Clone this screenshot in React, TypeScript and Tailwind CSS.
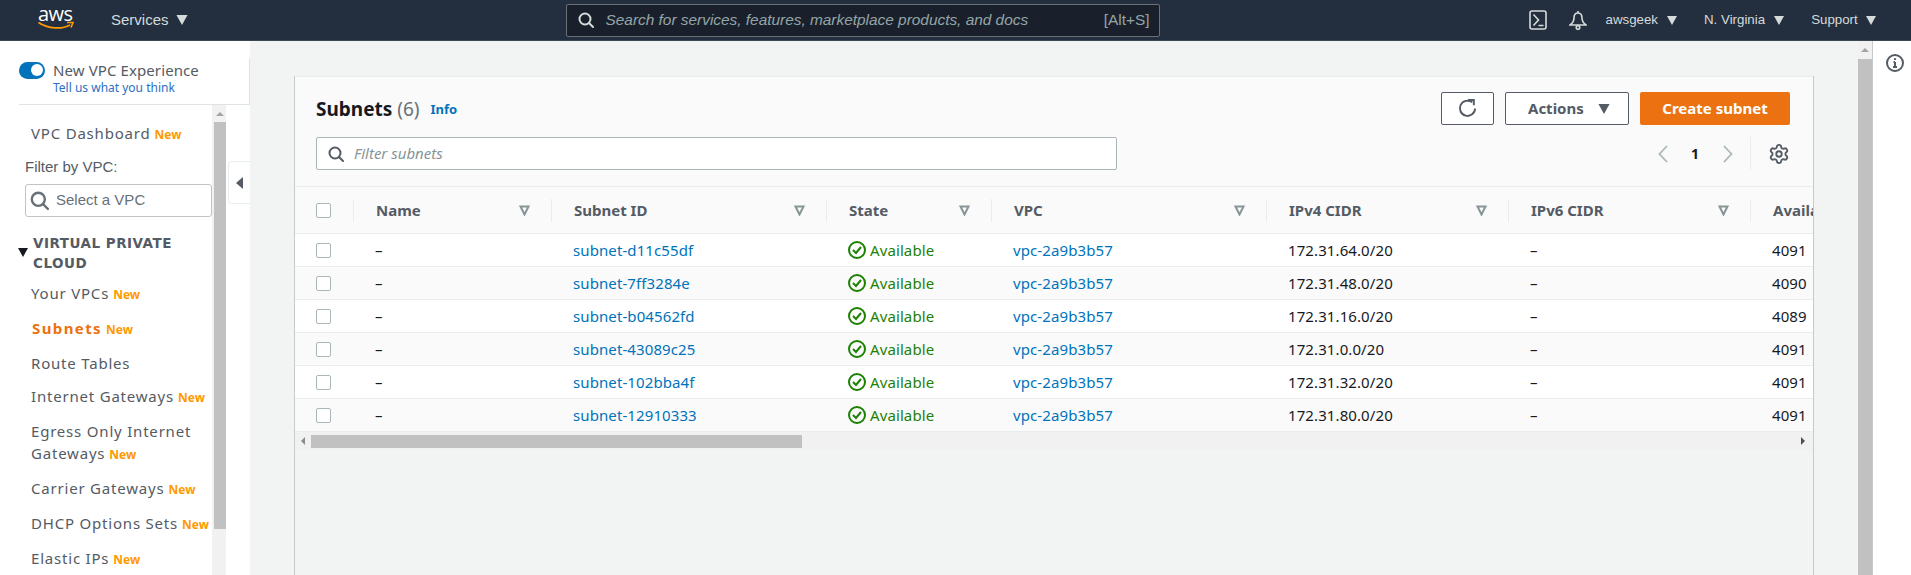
import React from 'react';
import { Settings } from 'lucide-react';

const subnets = [
  { id: 'subnet-d11c55df', cidr: '172.31.64.0/20', ips: '4091' },
  { id: 'subnet-7ff3284e', cidr: '172.31.48.0/20', ips: '4090' },
  { id: 'subnet-b04562fd', cidr: '172.31.16.0/20', ips: '4089' },
  { id: 'subnet-43089c25', cidr: '172.31.0.0/20', ips: '4091' },
  { id: 'subnet-102bba4f', cidr: '172.31.32.0/20', ips: '4091' },
  { id: 'subnet-12910333', cidr: '172.31.80.0/20', ips: '4091' },
];

const columns = ['Name', 'Subnet ID', 'State', 'VPC', 'IPv4 CIDR', 'IPv6 CIDR', 'Available IPv4'];
const gridCols = 'grid grid-cols-[58px_198px_275px_165px_275px_242px_242px_200px]';

const Caret = ({ className }: { className?: string }) => (
  <svg viewBox="0 0 10 9" className={className} fill="currentColor">
    <path d="M0 0h10L5 9z" />
  </svg>
);

const NewTag = () => <span className="ml-[4px] text-[12px] font-bold leading-[23px] tracking-normal text-[#ff9900]">New</span>;

const NavItem = ({ label, tag = true, className = '' }: { label: string; tag?: boolean; className?: string }) => (
  <div className={`py-[5.5px] pl-[31px] text-[15px] leading-[22px] tracking-[0.8px] text-[#545b64] ${className}`}>
    {label}
    {tag && <NewTag />}
  </div>
);

const SortIcon = () => (
  <svg viewBox="0 0 11 11" className="h-[11px] w-[11px] shrink-0 text-[#879596]" fill="none" stroke="currentColor" strokeWidth="2">
    <path d="M1.5 1.5h8L5.5 9.5z" />
  </svg>
);

const Checkbox = () => <div className="h-[15px] w-[15px] rounded-[2px] border border-[#aab7b8] bg-white" />;

const Search = ({ className }: { className?: string }) => (
  <svg viewBox="0 0 16 16" className={className} fill="none" stroke="currentColor" strokeWidth="2">
    <circle cx="7" cy="7" r="5.5" />
    <path d="M11 11l4 4" strokeLinecap="round" />
  </svg>
);

export default function App() {
  return (
    <div className="flex h-[575px] w-[1911px] flex-col overflow-hidden bg-[#f2f3f3] font-['Noto_Sans',sans-serif]">
      {/* top nav */}
      <header className="flex h-[41px] shrink-0 items-center border-b border-[#3b4654] bg-[#232f3e] font-['Liberation_Sans',sans-serif] text-[15px] text-[#d5dbdb]">
        <div className="relative ml-[38px] h-[40px] w-[36px]">
          <span className="absolute left-0 top-[2px] font-['Open_Sans',sans-serif] text-[20px] leading-[24px] tracking-[-0.5px] text-white">aws</span>
          <svg viewBox="0 0 36 9" className="absolute left-0 top-[21px] h-[9px] w-[36px]" fill="none">
            <path d="M0.5 1.5C10 8 24 8.5 32 4" stroke="#ff9900" strokeWidth="1.8" />
            <path d="M29 1.5h6l-2 5" stroke="#ff9900" strokeWidth="1.6" />
          </svg>
        </div>
        <span className="ml-[37px]">Services</span>
        <Caret className="ml-[7px] h-[10px] w-[12px]" />
        <div className="ml-[378px] flex h-[33px] w-[594px] items-center rounded-[2px] border border-[#687078] bg-[#19202c] pl-[11px] pr-[9px] text-[15.4px]">
          <Search className="h-[16px] w-[16px] text-[#d5dbdb]" />
          <span className="ml-[12px] flex-1 italic text-[#95a5a6]">Search for services, features, marketplace products, and docs</span>
          <span className="text-[#95a5a6]">[Alt+S]</span>
        </div>
        <svg viewBox="0 0 18 20" className="ml-[369px] h-[20px] w-[18px]" fill="none" stroke="currentColor" strokeWidth="1.6">
          <rect x="1" y="1" width="16" height="18" rx="2" />
          <path d="M4.5 4.5L9.5 10l-5 5.5M9.5 15.5h5" />
        </svg>
        <svg viewBox="0 0 18 20" className="ml-[22px] h-[20px] w-[18px]" fill="none" stroke="currentColor" strokeWidth="1.6">
          <path d="M9 1v2M9 3c-3 0-4 2-4 5 0 3-1 5-4 7h16c-3-2-4-4-4-7 0-3-1-5-4-5z" />
          <circle cx="9" cy="17.5" r="1.8" />
        </svg>
        <span className="ml-[19px] text-[13.3px]">awsgeek</span>
        <Caret className="ml-[9px] h-[9px] w-[10px]" />
        <span className="ml-[27px] text-[13.3px]">N. Virginia</span>
        <Caret className="ml-[9px] h-[9px] w-[10px]" />
        <span className="ml-[27px] text-[13.3px]">Support</span>
        <Caret className="ml-[8px] h-[9px] w-[10px]" />
      </header>

      <div className="flex min-h-0 flex-1">
        {/* side nav */}
        <aside className="relative flex w-[250px] shrink-0 flex-col bg-white">
          <div className="ml-[19px] mt-[17px] h-[47px] shrink-0 border-b border-r border-[#dfe3e3] pt-[3px]">
            <div className="flex items-center">
              <div className="flex h-[17px] w-[26px] items-center justify-end rounded-full bg-[#0073bb] pr-[2px]">
                <div className="h-[12px] w-[12px] rounded-full bg-white" />
              </div>
              <span className="ml-[8px] text-[15px] leading-[18px] tracking-[0.1px] text-[#545b64]">New VPC Experience</span>
            </div>
            <div className="ml-[34px] mt-[1px] text-[12px] leading-[16px] text-[#2a6fc4]">Tell us what you think</div>
          </div>
          <div className="flex min-h-0 flex-1">
            <div className="w-[212px] shrink-0 overflow-hidden pt-[11px]">
              <NavItem label="VPC Dashboard" />
              <div className="mt-[5px] pl-[25px] font-['Liberation_Sans',sans-serif] text-[15px] leading-[22px] text-[#545b64]">Filter by VPC:</div>
              <div className="ml-[25px] mt-[6px] flex h-[33px] w-[187px] items-center rounded-[3px] border border-[#c0c4c4] pl-[4px]">
                <Search className="h-[19px] w-[19px] text-[#687078]" />
                <span className="ml-[7px] font-['Liberation_Sans',sans-serif] text-[15px] text-[#687078]">Select a VPC</span>
              </div>
              <div className="relative mt-[16px] pl-[33px] font-['DejaVu_Sans',sans-serif] text-[13.5px] font-bold leading-[20px] tracking-[0.5px] text-[#545b64]">
                <Caret className="absolute left-[18px] top-[15px] h-[9px] w-[10px] text-[#16191f]" />
                VIRTUAL PRIVATE CLOUD
              </div>
              <NavItem label="Your VPCs" className="mt-[3px]" />
              <div className="py-[5.5px] pl-[32px] text-[15px] font-bold leading-[22px] tracking-[1.4px] text-[#ec7211]">
                Subnets
                <NewTag />
              </div>
              <NavItem label="Route Tables" tag={false} />
              <NavItem label="Internet Gateways" />
              <NavItem label="Egress Only Internet Gateways" />
              <NavItem label="Carrier Gateways" />
              <NavItem label="DHCP Options Sets" />
              <NavItem label="Elastic IPs" />
            </div>
            <div className="flex h-[560px] w-[14px] shrink-0 flex-col bg-[#f1f1f1] pl-[2px]">
              <div className="flex h-[17px] items-center justify-center">
                <div className="h-0 w-0 border-x-[4px] border-b-[4px] border-x-transparent border-b-[#a3a3a3]" />
              </div>
              <div className="h-[407px] bg-[#c1c1c1]" />
            </div>
          </div>
          {/* collapse handle sits over the panel edge */}
          <div className="absolute left-[228px] top-[120px] flex h-[43px] w-[22px] items-center justify-center rounded-l-[4px] border border-r-0 border-[#eaeded] bg-white">
            <div className="h-0 w-0 border-y-[6px] border-r-[7px] border-y-transparent border-r-[#545b64]" />
          </div>
        </aside>

        {/* main */}
        <main className="min-w-0 flex-1 pl-[44px] pt-[35px]">
          <div className="h-[600px] w-[1520px] overflow-hidden border-x border-[#c5cbcc]">
            <section className="border-t border-[#eaeded] bg-[#fafafa]">
              <div className="h-[110px] border-b border-[#eaeded] pl-[21px] pr-[23px] pt-[15px]">
                <div className="flex items-start justify-between">
                  <div className="flex h-[33px] items-center">
                    <h1 className="text-[19px] font-bold leading-[26px] text-[#16191f]">
                      Subnets <span className="font-normal text-[#687078]">(6)</span>
                    </h1>
                    <span className="ml-[11px] mt-[2px] text-[13px] font-bold text-[#0073bb]">Info</span>
                  </div>
                  <div className="flex items-center gap-[11px]">
                    <button className="flex h-[33px] w-[53px] items-center justify-center rounded-[2px] border border-[#545b64] bg-white text-[#545b64]">
                      <svg viewBox="0 0 18 18" className="h-[19px] w-[19px]" fill="none" stroke="currentColor" strokeWidth="1.8">
                        <path d="M13.5 3.2A7.2 7.2 0 1 0 16.2 9" />
                        <path d="M9.5 1h5.5v5" />
                      </svg>
                    </button>
                    <button className="flex h-[33px] w-[124px] items-center rounded-[2px] border border-[#545b64] bg-white pl-[22px] text-[15px] font-bold text-[#545b64]">
                      Actions
                      <Caret className="ml-[14px] h-[10px] w-[12px]" />
                    </button>
                    <button className="h-[33px] w-[150px] rounded-[2px] bg-[#ec7211] text-[15px] font-bold text-white">Create subnet</button>
                  </div>
                </div>
                <div className="mt-[12px] flex items-center">
                  <div className="flex h-[33px] w-[801px] items-center rounded-[2px] border border-[#aab7b8] bg-white pl-[11px]">
                    <Search className="h-[16px] w-[16px] text-[#545b64]" />
                    <span className="ml-[10px] text-[15px] italic text-[#879596]">Filter subnets</span>
                  </div>
                  <div className="ml-auto flex h-[33px] items-center">
                    <svg viewBox="0 0 10 18" className="h-[18px] w-[10px] text-[#aab7b8]" fill="none" stroke="currentColor" strokeWidth="1.8">
                      <path d="M9 1L1.5 9 9 17" />
                    </svg>
                    <span className="ml-[23px] text-[14px] font-bold leading-none text-[#16191f]">1</span>
                    <svg viewBox="0 0 10 18" className="ml-[24px] h-[18px] w-[10px] text-[#aab7b8]" fill="none" stroke="currentColor" strokeWidth="1.8">
                      <path d="M1 1l7.5 8L1 17" />
                    </svg>
                    <div className="ml-[17px] h-[33px] w-px bg-[#eaeded]" />
                    <Settings className="ml-[17px] h-[22px] w-[22px] text-[#545b64]" strokeWidth={2} />
                  </div>
                </div>
              </div>

              <div className="overflow-hidden">
                <div className={`${gridCols} h-[47px] w-[1655px] items-center border-b border-[#eaeded]`}>
                  <div className="pl-[21px]">
                    <Checkbox />
                  </div>
                  {columns.map((col) => (
                    <div key={col} className="flex items-center">
                      <div className="h-[23px] w-px shrink-0 bg-[#eaeded]" />
                      <span className="ml-[22px] flex-1 whitespace-nowrap text-[15px] font-bold text-[#545b64]">{col}</span>
                      <div className="mr-[21px]">
                        <SortIcon />
                      </div>
                    </div>
                  ))}
                </div>
                {subnets.map((s, i) => (
                  <div
                    key={s.id}
                    className={`${gridCols} h-[33px] w-[1655px] items-center border-b border-[#eaeded] text-[15px] tracking-[0.1px] text-[#16191f] ${i % 2 === 0 ? 'bg-white' : 'bg-[#fafafa]'}`}
                  >
                    <div className="pl-[21px]">
                      <Checkbox />
                    </div>
                    <div className="pl-[22px]">–</div>
                    <div className="pl-[22px] text-[#0073bb]">{s.id}</div>
                    <div className="flex items-center pl-[22px] text-[#1d8102]">
                      <svg viewBox="0 0 18 18" className="h-[18px] w-[18px]" fill="none" stroke="currentColor" strokeWidth="2">
                        <circle cx="9" cy="9" r="8" />
                        <path d="M5 9l3 3 5-6" />
                      </svg>
                      <span className="ml-[4px]">Available</span>
                    </div>
                    <div className="pl-[22px] text-[#0073bb]">vpc-2a9b3b57</div>
                    <div className="pl-[22px]">{s.cidr}</div>
                    <div className="pl-[22px]">–</div>
                    <div className="pl-[22px]">{s.ips}</div>
                  </div>
                ))}
              </div>
            </section>
            {/* table scrollbar */}
            <div className="flex h-[18px] items-center bg-[#f1f1f1]">
              <div className="flex w-[16px] shrink-0 justify-center">
                <div className="h-0 w-0 border-y-[4px] border-r-[4px] border-y-transparent border-r-[#8a8a8a]" />
              </div>
              <div className="h-[13px] w-[491px] bg-[#c1c1c1]" />
              <div className="ml-auto mr-[8px] h-0 w-0 border-y-[4px] border-l-[4px] border-y-transparent border-l-[#505050]" />
            </div>
          </div>
        </main>

        {/* page scrollbar */}
        <div className="w-[14px] shrink-0 bg-[#f1f1f1]">
          <div className="flex h-[18px] items-center justify-center">
            <div className="h-0 w-0 border-x-[4px] border-b-[4px] border-x-transparent border-b-[#a3a3a3]" />
          </div>
          <div className="h-full bg-[#c1c1c1]" />
        </div>

        {/* tools panel */}
        <div className="w-[39px] shrink-0 border-l border-[#c5cbcc] bg-white pl-[13px] pt-[13px]">
          <svg viewBox="0 0 18 18" className="h-[18px] w-[18px] text-[#545b64]" fill="none" stroke="currentColor" strokeWidth="2">
            <circle cx="9" cy="9" r="8" />
            <path d="M9 8v5M7 13h4M7.5 8H9" />
            <path d="M9 4.2v1.8" strokeWidth="2.2" />
          </svg>
        </div>
      </div>
    </div>
  );
}
